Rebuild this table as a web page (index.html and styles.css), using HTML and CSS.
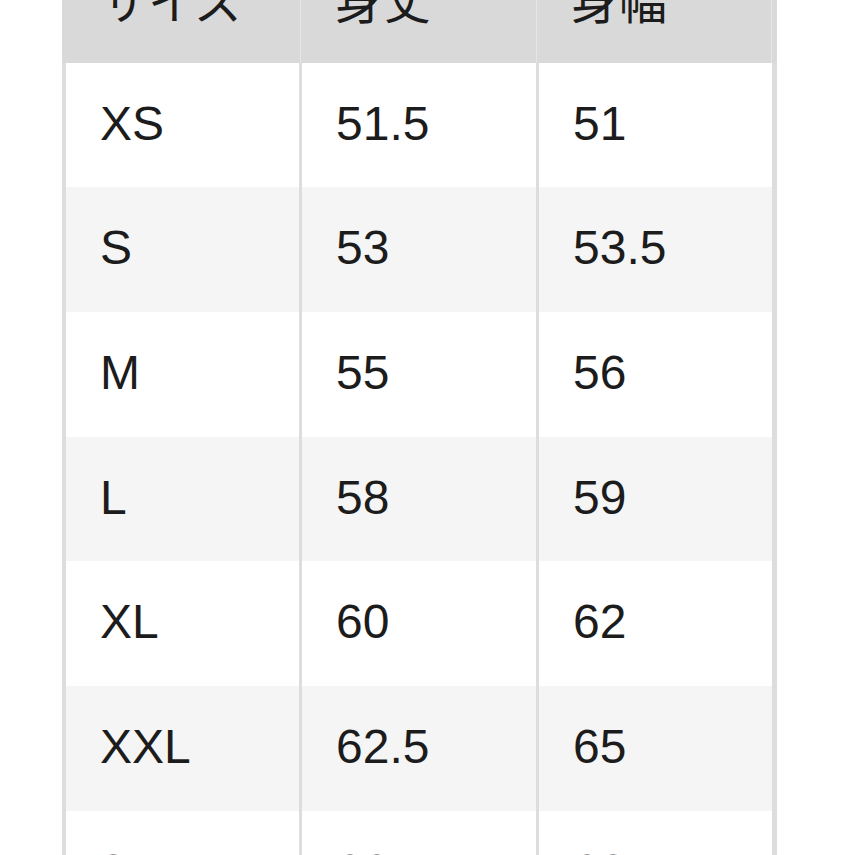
FILE: index.html
```html
<!DOCTYPE html>
<html lang="ja">
<head>
<meta charset="utf-8">
<link rel="stylesheet" href="styles.css">
</head>
<body>
<div class="table">
  <div class="row head"><div class="cell">サイズ</div><div class="cell">身丈</div><div class="cell">身幅</div></div>
  <div class="row"><div class="cell">XS</div><div class="cell">51.5</div><div class="cell">51</div></div>
  <div class="row alt"><div class="cell">S</div><div class="cell">53</div><div class="cell">53.5</div></div>
  <div class="row"><div class="cell">M</div><div class="cell">55</div><div class="cell">56</div></div>
  <div class="row alt"><div class="cell">L</div><div class="cell">58</div><div class="cell">59</div></div>
  <div class="row"><div class="cell">XL</div><div class="cell">60</div><div class="cell">62</div></div>
  <div class="row alt"><div class="cell">XXL</div><div class="cell">62.5</div><div class="cell">65</div></div>
  <div class="row"><div class="cell">3XL</div><div class="cell">66</div><div class="cell">68</div></div>
</div>
</body>
</html>
```
FILE: styles.css
```css
html, body {
  margin: 0;
  padding: 0;
  background: #ffffff;
  overflow: hidden;
}
body {
  height: 855px;
}
.table {
  margin-top: -62px;
  margin-left: 62px;
  width: 715px;
  background: #dddddd;
  padding: 0 4px;
  box-sizing: border-box;
  font-family: "Liberation Sans", "Noto Sans CJK JP", sans-serif;
  font-size: 48px;
  color: #1c1c1c;
}
.row {
  display: grid;
  grid-template-columns: 233px 234px 233px;
  column-gap: 3px;
  height: 124.7px;
}
.cell {
  background: #ffffff;
  display: flex;
  align-items: center;
  padding-left: 34px;
  padding-bottom: 4px;
}
.row.alt .cell {
  background: #f5f5f5;
}
.row.head {
  background: #d9d9d9;
  margin: 0 -4px;
  padding: 0 4px;
  column-gap: 1px;
  grid-template-columns: 234px 235px 234px;
}
.row.head .cell {
  background: #d9d9d9;
  box-shadow: 1px 0 0 #e6e6e6;
}
```
